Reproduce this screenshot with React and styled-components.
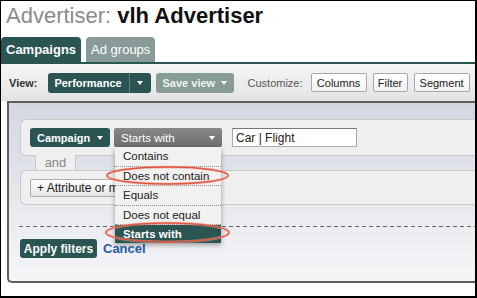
import React from "react";
import styled, { createGlobalStyle } from "styled-components";

const green = "#2a5552";

const GlobalStyle = createGlobalStyle`
  html, body { margin: 0; padding: 0; background: #fff; }
  * { box-sizing: border-box; }
`;

const Frame = styled.div`
  width: 477px;
  height: 298px;
  border: solid #000;
  border-width: 1px 2px 2px 1px;
  overflow: hidden;
  position: relative;
  background: #fff;
  font-family: "Liberation Sans", Arial, sans-serif;
`;

const Title = styled.h1`
  margin: 0;
  height: 36px;
  padding-left: 5px;
  font-size: 22px;
  line-height: 29px;
  font-weight: normal;
  color: #8b8b8b;
  white-space: nowrap;
  b {
    color: #111;
  }
`;

const TabStrip = styled.div`
  display: flex;
  align-items: flex-end;
  gap: 5px;
  height: 27px;
  border-bottom: 2px solid ${green};
`;

const Tab = styled.div`
  height: 25px;
  padding: 0 5px;
  display: flex;
  align-items: center;
  border-radius: 4px 4px 0 0;
  font-size: 13px;
  color: #fff;
  font-weight: ${(p) => (p.$active ? "bold" : "normal")};
  background: ${(p) => (p.$active ? green : "#889b98")};
`;

const Toolbar = styled.div`
  height: 37px;
  display: flex;
  align-items: center;
  padding-left: 8px;
  background: linear-gradient(#f6f6f6, #e3e3e3);
  font-size: 11px;
`;

const Label = styled.span`
  color: ${(p) => (p.$bold ? "#333" : "#555")};
  font-weight: ${(p) => (p.$bold ? "bold" : "normal")};
  margin: 0 ${(p) => p.$right || 0}px 0 ${(p) => p.$left || 0}px;
`;

const Caret = styled.span`
  width: 0;
  height: 0;
  border-left: 3.5px solid transparent;
  border-right: 3.5px solid transparent;
  border-top: 4px solid #fff;
`;

const GreenButton = styled.div`
  height: ${(p) => p.$h || 20}px;
  width: ${(p) => p.$w}px;
  display: flex;
  align-items: center;
  justify-content: ${(p) => (p.$center ? "center" : "space-between")};
  padding: 0 7px;
  background: ${(p) => (p.$muted ? "#879b97" : green)};
  color: ${(p) => (p.$muted ? "#eef3f2" : "#fff")};
  font-weight: bold;
  font-size: 11px;
  border-radius: ${(p) => p.$radius || "3px"};
  border-left: ${(p) => (p.$split ? "1px solid #5f807c" : "none")};
  margin-left: ${(p) => p.$ml || 0}px;
`;

const Tools = styled.div`
  display: flex;
  gap: 6px;
  margin-left: 8px;
`;

const ToolButton = styled.div`
  width: ${(p) => p.$w}px;
  height: 19px;
  display: flex;
  align-items: center;
  justify-content: center;
  border: 1px solid #a8a8a8;
  border-radius: 2px;
  background: linear-gradient(#fff, #f2f2f2);
  color: #222;
  font-size: 11px;
`;

const Panel = styled.div`
  margin-left: 6px;
  height: 182px;
  border: 2px solid #5e5e5e;
  border-right: none;
  border-bottom-left-radius: 5px;
  background: linear-gradient(#d3d8e0, #f5f6f8);
  padding: 16px 0 0 11px;
`;

const FilterBox = styled.div`
  height: ${(p) => p.$h}px;
  margin-right: -10px;
  margin-top: ${(p) => p.$mt || 0}px;
  display: flex;
  align-items: center;
  padding-left: 9px;
  background: #efefef;
  border: 1px solid #c8c8c8;
  border-right: none;
  border-radius: 6px 0 0 6px;
`;

const AndTab = styled.div`
  width: 41px;
  height: 16px;
  margin: -1px 0 0 15px;
  background: #efefef;
  border: 1px solid #c8c8c8;
  border-top: none;
  border-bottom: none;
  color: #8a8a8a;
  font-size: 13px;
  line-height: 15px;
  text-align: center;
`;

const SelectWrap = styled.div`
  position: relative;
  margin-left: 4px;
`;

const Select = styled.div`
  width: 108px;
  height: 19px;
  display: flex;
  align-items: center;
  justify-content: space-between;
  padding: 0 7px;
  border-radius: 2px;
  background: linear-gradient(#888, #6d6d6d);
  color: #fff;
  font-size: 11.5px;
`;

const Menu = styled.div`
  position: absolute;
  top: 19px;
  left: 1px;
  width: 106px;
  background: #f1f1f1;
  box-shadow: 0 2px 5px rgba(0, 0, 0, 0.35);
  z-index: 5;
`;

const MenuItem = styled.div`
  height: ${(p) => (p.$selected ? 18 : 19.5)}px;
  padding-left: 8px;
  display: flex;
  align-items: center;
  font-size: 11.5px;
  color: ${(p) => (p.$selected ? "#fff" : "#222")};
  font-weight: ${(p) => (p.$selected ? "bold" : "normal")};
  background: ${(p) => (p.$selected ? green : "transparent")};
  border-bottom: ${(p) => (p.$selected ? "none" : "1px dotted #8a8a8a")};
`;

const Marker = styled.svg`
  position: absolute;
  left: ${(p) => p.$x}px;
  top: ${(p) => p.$y}px;
  overflow: visible;
  pointer-events: none;
`;

const TextInput = styled.div`
  width: 125px;
  height: 19px;
  margin-left: 10px;
  padding: 0 3px;
  display: flex;
  align-items: center;
  background: #fff;
  border: 1px solid #aaa;
  border-top-color: #777;
  color: #2a1a10;
  font-size: 12px;
`;

const AddButton = styled.div`
  height: 18px;
  width: 140px;
  display: flex;
  align-items: center;
  padding-left: 6px;
  border: 1px solid #aaa;
  border-radius: 2px;
  background: linear-gradient(#fff, #e6e6e6);
  color: #222;
  font-size: 12px;
  white-space: nowrap;
`;

const Dashed = styled.div`
  height: 1px;
  margin: 21px -10px 0 -1px;
  background: repeating-linear-gradient(90deg, #666 0 4px, transparent 4px 7px);
`;

const Actions = styled.div`
  display: flex;
  align-items: center;
  gap: 6px;
  margin-top: 12px;
`;

const ApplyButton = styled.div`
  width: 77px;
  height: 19px;
  display: flex;
  align-items: center;
  justify-content: center;
  border-radius: 3px;
  background: ${green};
  color: #fff;
  font-weight: bold;
  font-size: 12px;
`;

const CancelLink = styled.span`
  color: #1d5ca6;
  font-weight: bold;
  font-size: 13px;
  margin-top: -1px;
`;

const Ring = ({ x, y, w, h }) => (
  <Marker $x={x} $y={y} width={w} height={h}>
    <ellipse cx={w / 2} cy={h / 2} rx={w / 2} ry={h / 2} fill="none" stroke="#f0a090" strokeWidth="3" opacity="0.5" />
    <ellipse cx={w / 2} cy={h / 2} rx={w / 2} ry={h / 2} fill="none" stroke="#e2553f" strokeWidth="1.3" />
  </Marker>
);

const options = ["Contains", "Does not contain", "Equals", "Does not equal", "Starts with"];

export default function App() {
  return (
    <Frame>
      <GlobalStyle />
      <Title>
        Advertiser: <b>vlh Advertiser</b>
      </Title>
      <TabStrip>
        <Tab $active>Campaigns</Tab>
        <Tab>Ad groups</Tab>
      </TabStrip>
      <Toolbar>
        <Label $bold $right={10}>View:</Label>
        <GreenButton $w={81} $center $radius="3px 0 0 3px">Performance</GreenButton>
        <GreenButton $w={22} $center $split $radius="0 3px 3px 0">
          <Caret />
        </GreenButton>
        <GreenButton $w={78} $muted $ml={5}>
          Save view <Caret />
        </GreenButton>
        <Label $left={14}>Customize:</Label>
        <Tools>
          <ToolButton $w={56}>Columns</ToolButton>
          <ToolButton $w={35}>Filter</ToolButton>
          <ToolButton $w={56}>Segment</ToolButton>
        </Tools>
      </Toolbar>
      <Panel>
        <FilterBox $h={37}>
          <GreenButton $w={80} $h={19}>
            Campaign <Caret />
          </GreenButton>
          <SelectWrap>
            <Select>
              Starts with <Caret />
            </Select>
            <Menu>
              {options.map((o) => (
                <MenuItem key={o} $selected={o === "Starts with"}>
                  {o}
                </MenuItem>
              ))}
              <Ring x={-8} y={20} w={121} h={17} />
              <Ring x={-9} y={76} w={123} h={19} />
            </Menu>
          </SelectWrap>
          <TextInput>Car | Flight</TextInput>
        </FilterBox>
        <AndTab>and</AndTab>
        <FilterBox $h={35} $mt={-1}>
          <AddButton>+ Attribute or metric</AddButton>
        </FilterBox>
        <Dashed />
        <Actions>
          <ApplyButton>Apply filters</ApplyButton>
          <CancelLink>Cancel</CancelLink>
        </Actions>
      </Panel>
    </Frame>
  );
}
